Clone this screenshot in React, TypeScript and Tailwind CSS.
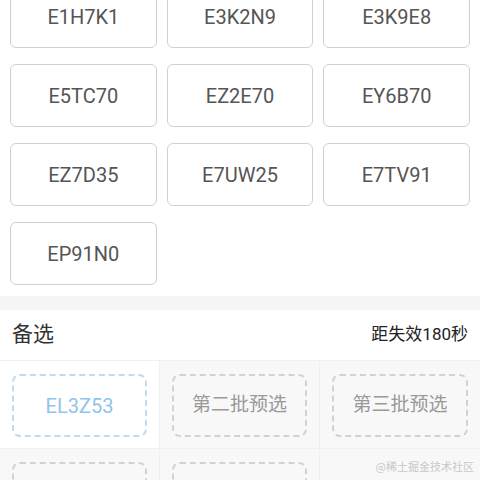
import React from "react";

const plates = [
  "E1H7K1", "E3K2N9", "E3K9E8",
  "E5TC70", "EZ2E70", "EY6B70",
  "EZ7D35", "E7UW25", "E7TV91",
  "EP91N0",
];

type Slot = { label?: string; active?: boolean; bg: string };

const slots: Slot[] = [
  { label: "EL3Z53", active: true, bg: "bg-white" },
  { label: "第二批预选", bg: "bg-[#f8f8f8]" },
  { label: "第三批预选", bg: "bg-[#f8f8f8]" },
  { label: "", bg: "bg-[#f8f8f8]" },
  { label: "", bg: "bg-[#f8f8f8]" },
  { bg: "bg-[#f8f8f8]" },
];

const font = { fontFamily: '"Roboto", "Noto Sans CJK SC", sans-serif' };

export default function App() {
  return (
    <div className="relative h-[480px] w-[480px] overflow-hidden bg-white" style={font}>
      {/* 已选车牌 */}
      <div className="-mt-[15px] grid grid-cols-3 gap-x-[10px] gap-y-[16px] px-[10px] pb-[11px]">
        {plates.map(p => (
          <div
            key={p}
            className="flex h-[63px] items-center justify-center rounded-[6px] border border-[#cdd1d6] text-[20px] text-[#555]"
          >
            {p}
          </div>
        ))}
      </div>

      <div className="h-[14px] bg-[#f4f5f6]" />

      {/* 备选 */}
      <div className="flex h-[50px] items-center justify-between px-[12px]">
        <span className="text-[21px] text-[#333]">备选</span>
        <span className="text-[17px] text-[#222]">距失效180秒</span>
      </div>

      <div className="grid grid-cols-3 border-t border-[#f0f0f0]">
        {slots.map((s, i) => (
          <div
            key={i}
            className={`h-[88px] border-b border-r border-[#f0f0f0] px-[12px] pt-[13px] ${s.bg} ${i % 3 === 2 ? "border-r-0" : ""}`}
          >
            {s.label !== undefined && (
              <div
                className={`flex h-[63px] items-center justify-center rounded-[8px] border-2 border-dashed ${
                  s.active
                    ? "border-[#bcdcf3] bg-white text-[20px] text-[#8fc4ec]"
                    : "border-[#d0d3d6] text-[19px] text-[#999]"
                }`}
              >
                {s.label}
              </div>
            )}
          </div>
        ))}
      </div>

      <span
        className="absolute bottom-[6px] right-[6px] text-[11px] text-[#c8c8c8]"
        style={{ fontFamily: '"Noto Sans CJK SC", serif' }}
      >
        @稀土掘金技术社区
      </span>
    </div>
  );
}
